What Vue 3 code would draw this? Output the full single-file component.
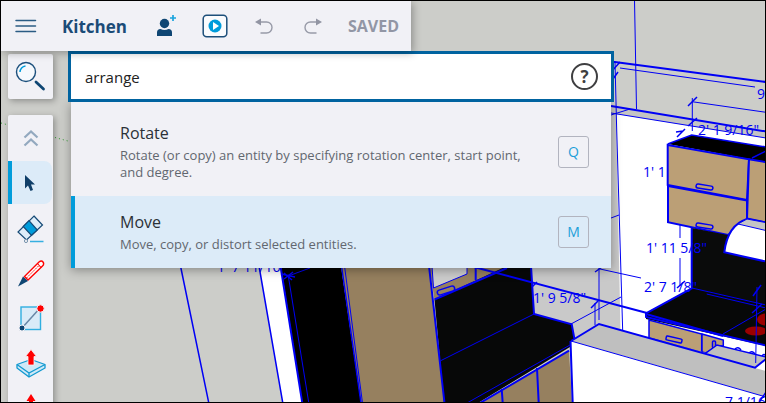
<template>
<div class="workspace">

  <!-- model viewport -->
  <svg class="scene" viewBox="1 1 764 401" preserveAspectRatio="xMinYMin slice" aria-hidden="true">
    <rect x="0" y="0" width="766" height="403" fill="#cccdc9" />
    <path class="guide" d="M1 123 L68 141" />

    <g>
      <!-- fridge side -->
      <path fill="#fff" d="M259 266 H281 L302.500 403 H283 Z" />
      <path fill="#000" d="M281 266 H341 L361 403 H302.500 Z" />
      <path fill="#96805f" d="M341 266 H429 L444.500 403 H361 Z" />
      <path class="edge" d="M180.500 266 L208.800 403 M259 266 L282.800 403 M341.500 266 L361 403" />
      <path class="edge bold" d="M280.500 266 L302.300 403" />
      <path class="edge thin" d="M344.500 266 L362.500 403 M288.300 276 L308.800 403 M288.300 276 L310 268" />
      <path class="edge" d="M281 274 L295 277 M284 279 L293 272 M284 273 L292 280" />
    </g>

    <g>
      <!-- back counter -->
      <path fill="#c9c9c9" d="M531 266 H611 V100 L616.500 114 L622.700 331 L599 325 L571 342 L534 316 Z" />
      <path fill="#96805f" d="M429 266 H510 L434.500 299.500 Z" />
      <path fill="#ccc" class="edge thin" d="M432 266 H467 V274 L433.500 288 Z" />
      <path fill="#070808" d="M507 266 H531 L534 314 L571.700 324.300 L574.300 338.300 L570 347 L478 403 H444 L434.500 299.500 Z" />
      <path fill="#96805f" d="M480 403 L569 350.700 L572 403 Z" />
      <path class="edge bold" d="M429 266 L444.500 403 M434.500 299.500 L507 268 M475.700 266 V280 M531 266 L534 314 L571.700 324.300 L574.300 338.300 M480 403 L569 350.700 M537 368 L538.700 403 M501.700 389 L502.700 403" />
      <path class="edge thin" d="M440.700 360.700 L534 314 M467 403 L570 345" />
      <rect class="edge" x="437" y="288" width="18" height="5" rx="2.500" fill="#96805f" transform="rotate(-18 446 290.500)" />
    </g>

    <g>
      <!-- right wall -->
      <path fill="#c4c4c3" d="M611 106 L766 131.500 V139 L611 113 Z" />
      <path fill="#fff" d="M616 114 L766 138 V403 H622 Z" />
      <path class="edge bold" d="M611 61.600 L766 82 M611 106 L766 131.500" />
      <path class="edge thin" d="M620 68 L755 87 M611 113 L766 138 M611 115 L630 109 M611 218 L619 215 M600 269 L641 278" />
      <path class="edge thin" d="M634.500 0 L636.500 109 M615 62 L616.700 130 L622.700 331" />
      <path class="edge" d="M612 71 L620 62 M613 79 L618 72" />

      <!-- wall cabinets -->
      <path fill="#000" d="M667.700 144 L691.700 135 L766 147 V162 Z" />
      <path fill="#bb9f76" class="edge bold" d="M667.700 145 L749 159.300 L747 200 L667.700 185 Z" />
      <path fill="#bb9f76" class="edge bold" d="M668 186 L747 200.500 V219 L728 235 L668 222.300 Z" />
      <path fill="#bb9f76" class="edge bold" d="M749 159.300 L768 162.500 V223 L747 218.500 Z" />
      <path class="edge" d="M667.700 144 L691.700 135 L766 147 M752 158 L766 151" />
      <rect class="edge" x="696" y="185" width="17" height="4" rx="2" fill="#bb9f76" transform="rotate(9 704 187)" />
      <rect class="edge" x="696" y="224" width="17" height="4" rx="2" fill="#bb9f76" transform="rotate(9 704 226)" />

      <!-- backsplash, hood and counter -->
      <path fill="#0a0b0b" d="M692 228 L728 235 V250 L766 260 V310 L692 290 Z" />
      <path fill="#fff" class="edge bold" d="M724.300 252.300 C726 238 731 224 747 219 L768 223 V262 Z" />
      <path fill="#c4c4c4" class="edge thin" d="M738 224 L747 219 L768 223 V231 Z" />
      <path fill="#070808" d="M646 313 L692 288 L766 305 V346 L646 319 Z" />
      <path fill="#fff" d="M723 338 L766 347 V359 L723 346 Z" />
      <ellipse cx="756" cy="331" rx="11" ry="4.500" fill="#9b0000" />
      <ellipse cx="766" cy="319.500" rx="9" ry="6" fill="#9b0000" />
      <path class="edge bold" d="M691.700 228 V288.300 L646 313.300 V317 L766 345.500" />
      <path class="edge bold" d="M646 314 L723 336" />
      <path class="edge thin" d="M692 288 L766 305 M706.700 294 L766 308 M723 334 L766 309" />

      <!-- base drawers -->
      <path fill="#bb9f76" class="edge" d="M649 320 L701.700 334 V352.700 L649 338 Z" />
      <path fill="#bb9f76" class="edge" d="M702 334 L723.300 340 V346 H717 L706 353 L702 352 Z" />
      <rect class="edge" x="666" y="337.500" width="16" height="4" rx="1" fill="#bb9f76" transform="rotate(13 674 339.500)" />
      <rect class="edge" x="712.500" y="341" width="3" height="7" rx="1" fill="#bb9f76" />
      <path class="edge" d="M735 349 q3 -3 6 1 M749 353 q3 -3 6 1 M762 356 q2 -3 4 0" />
    </g>

    <g>
      <!-- peninsula -->
      <path fill="#bfbfbf" d="M571 341 L599 324 L706 353 L717 345 L766 357 V397 L600 349 Z" />
      <path fill="#fff" d="M571 341 L766 397 V403 H572.700 Z" />
      <path fill="#fff" d="M755 368 L766 359 V371 Z" />
      <path class="edge bold" d="M571 341 L599 324 L755 367.700 L766 359 M570.500 341 L572.700 403" />
      <path class="edge" d="M706 353 L717 345 L766 357" />
      <path class="edge thin" d="M571 341 L766 397" />
      <path class="edge bold" d="M474 267 L647 313" />
    </g>

    <!-- dimension lines and labels -->
    <path class="edge thin" d="M571 324 L621 297 M599 266 V320 M595 303 V325 M692.300 98 V131 M692 101.700 L766 112.300 M680 225 V238 M680 258 V286 M757 287 L755.700 363" />
    <path class="edge" d="M688 106 L697 97 M688 126 L697 118 M677 137 L685 129 M676 132 L683 131 M591 308 L598 301 M595 272 L602 267 M532 287 L537 282 M677 288 L685 281 M753 296 L761 285 M752 313 L762 304 M760 401 L766 392" />
    <text v-for="(dim, i) in dimensions" :key="'dim' + i" class="dim" :x="dim.x" :y="dim.y">{{ dim.label }}</text>
  </svg>

  <header class="topbar">
    <button type="button" class="bar-button" aria-label="Menu">
      <svg width="22" height="14" viewBox="0 0 22 14" fill="none" stroke="#2b5c84" stroke-width="1.500" stroke-linecap="round">
        <path d="M1 1.500 H20.500 M1 7 H20.500 M1 12.500 H20.500" />
      </svg>
    </button>
    <h1 class="title">Kitchen</h1>
    <button type="button" class="bar-button" aria-label="Invite">
      <svg width="22" height="24" viewBox="0 0 22 24">
        <circle cx="9.500" cy="9.500" r="4.700" fill="#0f4673" />
        <path d="M2 22 V18.500 Q2 15 5.500 15 Q9.500 17 13.500 15 Q17 15 17 18.500 V22 Z" fill="#0f4673" />
        <path d="M18 1 V7 M15 4 H21" stroke="#1ba4dd" stroke-width="1.700" fill="none" />
      </svg>
    </button>
    <button type="button" class="bar-button" aria-label="Play">
      <svg width="26" height="24" viewBox="0 0 26 24">
        <rect x="1.200" y="1.200" width="23.600" height="21.600" rx="3.500" fill="#fafbfd" stroke="#1d4f7a" stroke-width="1.500" />
        <circle cx="13" cy="12" r="6.500" fill="#009cdb" />
        <path d="M11 8 L17 12 L11 16 Z" fill="#fff" />
      </svg>
    </button>
    <button type="button" class="bar-button" aria-label="Undo">
      <svg width="20" height="18" viewBox="0 0 20 18">
        <path d="M5 5 H12.500 A5.500 5.500 0 0 1 12.500 16 H6.500" fill="none" stroke="#989ba8" stroke-width="1.400" />
        <path d="M1 5 L7 1.500 V8.500 Z" fill="#9295a3" />
      </svg>
    </button>
    <button type="button" class="bar-button" aria-label="Redo">
      <svg width="20" height="18" viewBox="0 0 20 18">
        <path d="M14 5 H7.500 A5.500 5.500 0 0 0 7.500 16 H13.500" fill="none" stroke="#989ba8" stroke-width="1.400" />
        <path d="M19 5 L13 1.500 V8.500 Z" fill="#9295a3" />
      </svg>
    </button>
    <span class="status">SAVED</span>
  </header>

  <div class="main">
    <aside class="rail">
      <button type="button" class="search-toggle" aria-label="Search">
        <svg width="31" height="31" viewBox="0 0 31 31" fill="none">
          <circle cx="11" cy="11" r="9.500" stroke="#1b4f7c" stroke-width="1.400" fill="#f5f9fd" />
          <path d="M5 11 A6 6 0 0 1 10.500 5" stroke="#009cdb" stroke-width="1.500" />
          <path d="M21 21 L28.500 28" stroke="#0f4673" stroke-width="2.800" stroke-linecap="round" />
        </svg>
      </button>

      <nav class="tools" aria-label="Tools">
        <button type="button" class="tool" aria-label="Collapse">
          <svg width="16" height="18" viewBox="0 0 16 18" fill="none" stroke="#93a9bf" stroke-width="2.200">
            <path d="M1.500 8.500 L8 2.500 L14.500 8.500 M1.500 16.500 L8 10.500 L14.500 16.500" />
          </svg>
        </button>
        <button type="button" class="tool active" aria-label="Select">
          <svg width="14" height="20" viewBox="0 0 14 20">
            <path d="M2 2 V15.500 L5 12.500 L7.500 18 L10 17 L8 11.500 H12 Z" fill="#0f3e68" />
          </svg>
        </button>
        <button type="button" class="tool" aria-label="Eraser">
          <svg width="30" height="30" viewBox="0 0 30 30">
            <g stroke="#164a76" stroke-width="1.200">
              <path d="M18 3 L26.500 12 L10.500 27 L2 19 Z" fill="#deedf9" />
              <path d="M13 7.700 L21.300 17 L15.500 22.300 L7.200 13.500 Z" fill="#009cdb" />
            </g>
            <circle cx="10" cy="28" r="1.600" fill="#f1f1f6" stroke="#7894ad" />
            <path d="M14 28.500 H27.500" stroke="#35afe0" stroke-width="1.500" />
          </svg>
        </button>
        <button type="button" class="tool" aria-label="Line">
          <svg width="28" height="28" viewBox="0 0 28 28">
            <path d="M7.500 17.500 L22 3 Q24.500 1 26 3 Q27.500 5 25.500 7 L11 21 Z" fill="#fff" stroke="#f00" stroke-width="1.400" />
            <path d="M20.500 4.500 L24 8.500" stroke="#f00" stroke-width="1.100" fill="none" />
            <path d="M9.500 19 L22 6.500" stroke="#f00" stroke-width="1" stroke-dasharray="2 1" fill="none" />
            <path d="M1 27.500 L6 17.500 L11 22 Z" fill="#0f4673" />
          </svg>
        </button>
        <button type="button" class="tool" aria-label="Rectangle">
          <svg width="28" height="28" viewBox="0 0 28 28">
            <rect x="4" y="3" width="19.500" height="22.500" fill="#d9ebf8" stroke="#30aee0" stroke-width="1.400" />
            <path d="M5 24 L23 4" stroke="#6887a6" stroke-width="1.500" />
            <circle cx="5" cy="24" r="3" fill="#0f4673" stroke="#f1f1f6" />
            <circle cx="23.500" cy="4.500" r="3.700" fill="#f00" stroke="#f1f1f6" />
          </svg>
        </button>
        <button type="button" class="tool" aria-label="Push/Pull">
          <svg width="30" height="30" viewBox="0 0 30 30">
            <path d="M1 16.500 L15 11.500 L29 16.500 V20 L13 29 L1 20 Z" fill="#cfe9f7" stroke="#1299d0" stroke-width="1.300" stroke-linejoin="round" />
            <path d="M1 16.500 L13 25 L29 16.500 M13 25 V29" fill="none" stroke="#1299d0" stroke-width="1.300" />
            <path d="M12 17 V8.500 H9.500 L15 1.500 L20.500 8.500 H18 V17 Z" fill="#f00" stroke="#f8f5f8" stroke-width="0.800" />
          </svg>
        </button>
        <button type="button" class="tool" aria-label="Move">
          <svg width="30" height="30" viewBox="0 0 30 30">
            <path d="M13 24 V8 H10.500 L15 1 L19.500 8 H17 V24 Z" fill="#f00" />
          </svg>
        </button>
      </nav>
    </aside>

    <section class="finder">
      <div class="field">
        <input v-model="query" type="text" aria-label="Search tools" spellcheck="false">
        <button type="button" class="help" aria-label="Help">?</button>
      </div>
      <ul class="results">
        <li v-for="(item, i) in results" :key="item.name" :class="['result', { selected: i === selected }]" @mouseenter="selected = i">
          <div class="copy">
            <h2>{{ item.name }}</h2>
            <p>{{ item.text }}</p>
          </div>
          <kbd>{{ item.shortcut }}</kbd>
        </li>
      </ul>
    </section>
  </div>

</div>
</template>

<script setup>
import { ref } from 'vue'

const query = ref('arrange')
const selected = ref(1)

const results = [
  { name: 'Rotate', text: 'Rotate (or copy) an entity by specifying rotation center, start point, and degree.', shortcut: 'Q' },
  { name: 'Move', text: 'Move, copy, or distort selected entities.', shortcut: 'M' }
]

const dimensions = [
  { x: 757, y: 99, label: '9' },
  { x: 698, y: 135, label: '2\' 1 9/16"' },
  { x: 643, y: 177, label: '1\' 1' },
  { x: 646, y: 253, label: '1\' 11 5/8"' },
  { x: 644, y: 292, label: '2\' 7 1/8"' },
  { x: 533, y: 303, label: '1\' 9 5/8"' },
  { x: 217, y: 272, label: '1\' 7 11/16"' },
  { x: 725, y: 407, label: '7 1/16"' }
]
</script>

<style>
body {
  margin: 0;
}
</style>

<style scoped>
.workspace,
.workspace * {
  box-sizing: border-box;
}
.workspace {
  position: relative;
  height: 100vh;
  overflow: hidden;
  border: 1px solid #000;
  background: #cccdc9;
  font-family: "Open Sans", "Noto Sans", sans-serif;
}
button {
  display: flex;
  align-items: center;
  justify-content: center;
  padding: 0;
  border: 0;
  background: none;
  cursor: pointer;
}
/* viewport */
.scene {
  position: absolute;
  inset: 0;
  width: 100%;
  height: 100%;
}
.edge {
  stroke: #0000f5;
  stroke-width: 1.5px;
}
path.edge:not([fill]) {
  fill: none;
}
.edge.thin {
  stroke-width: 1px;
}
.edge.bold {
  stroke-width: 2px;
}
.guide {
  stroke: #2f9a2f;
  stroke-width: 1px;
  stroke-dasharray: 1 3;
}
.dim {
  fill: #0000f5;
  font-size: 14px;
  font-weight: 500;
}
/* top bar */
.topbar {
  position: relative;
  z-index: 4;
  display: flex;
  align-items: center;
  width: fit-content;
  height: 50px;
  padding-right: 12px;
  background: #f1f1f6;
  box-shadow: 2px 2px 8px rgba(0, 0, 0, 0.3);
}
.bar-button {
  width: 49px;
  height: 50px;
}
.title {
  width: 91px;
  margin: 0;
  padding-left: 12px;
  color: #1b4b77;
  font-size: 17px;
  font-weight: 700;
}
.status {
  padding-left: 11px;
  color: #9296a5;
  font-size: 16px;
  font-weight: 700;
}
.main {
  position: relative;
  display: flex;
  align-items: flex-start;
  gap: 15px;
  padding-left: 7px;
}
/* tool rail */
.rail {
  display: flex;
  flex: 0 0 45px;
  flex-direction: column;
  gap: 16px;
  padding-top: 3px;
}
.search-toggle,
.tools {
  border-radius: 2px;
  background: #f1f1f6;
  box-shadow: 2px 2px 6px rgba(0, 0, 0, 0.3);
}
.search-toggle {
  height: 45px;
}
.tools {
  display: flex;
  flex-direction: column;
  gap: 2px;
  padding-top: 1px;
}
.tool {
  height: 43px;
}
.tool.active {
  margin-right: 1px;
  padding-right: 4px;
  border-left: 4px solid #009cdb;
  border-radius: 0 8px 8px 0;
  background: #dcebf8;
}
/* command search */
.finder {
  flex: 0 1 546px;
}
.field {
  position: relative;
  z-index: 3;
  display: flex;
  align-items: center;
  height: 51px;
  padding: 0 13px 0 14px;
  border: 3px solid #0063a0;
  background: #fff;
}
.field input {
  flex: 1;
  min-width: 0;
  padding: 0;
  border: 0;
  outline: 0;
  background: none;
  color: #222;
  font-family: inherit;
  font-size: 15px;
}
.help {
  width: 27px;
  height: 27px;
  border: 2px solid #3f3f41;
  border-radius: 50%;
  color: #3f3f41;
  font-family: inherit;
  font-size: 17px;
  font-weight: 700;
  line-height: 23px;
}
.results {
  margin: 0 3px;
  padding: 5px 0 0;
  list-style: none;
  background: #f1f1f6;
  box-shadow: 0 2px 10px rgba(0, 0, 0, 0.35);
}
.result {
  display: flex;
  align-items: center;
  justify-content: space-between;
  gap: 24px;
  padding: 15px 22px 15px 45px;
  border-left: 4px solid transparent;
}
.result.selected {
  border-left-color: #009cdb;
  background: #dcebf8;
}
h2 {
  margin: 0 0 3px;
  color: #2b3036;
  font-size: 16px;
  font-weight: 400;
  line-height: 22px;
}
p {
  margin: 0;
  color: #62676f;
  font-size: 13px;
  line-height: 17px;
}
kbd {
  flex: 0 0 31px;
  border: 1px solid #b2b4bf;
  border-radius: 3px;
  color: #1d9fd9;
  font-family: inherit;
  font-size: 14px;
  line-height: 30px;
  text-align: center;
}
</style>
